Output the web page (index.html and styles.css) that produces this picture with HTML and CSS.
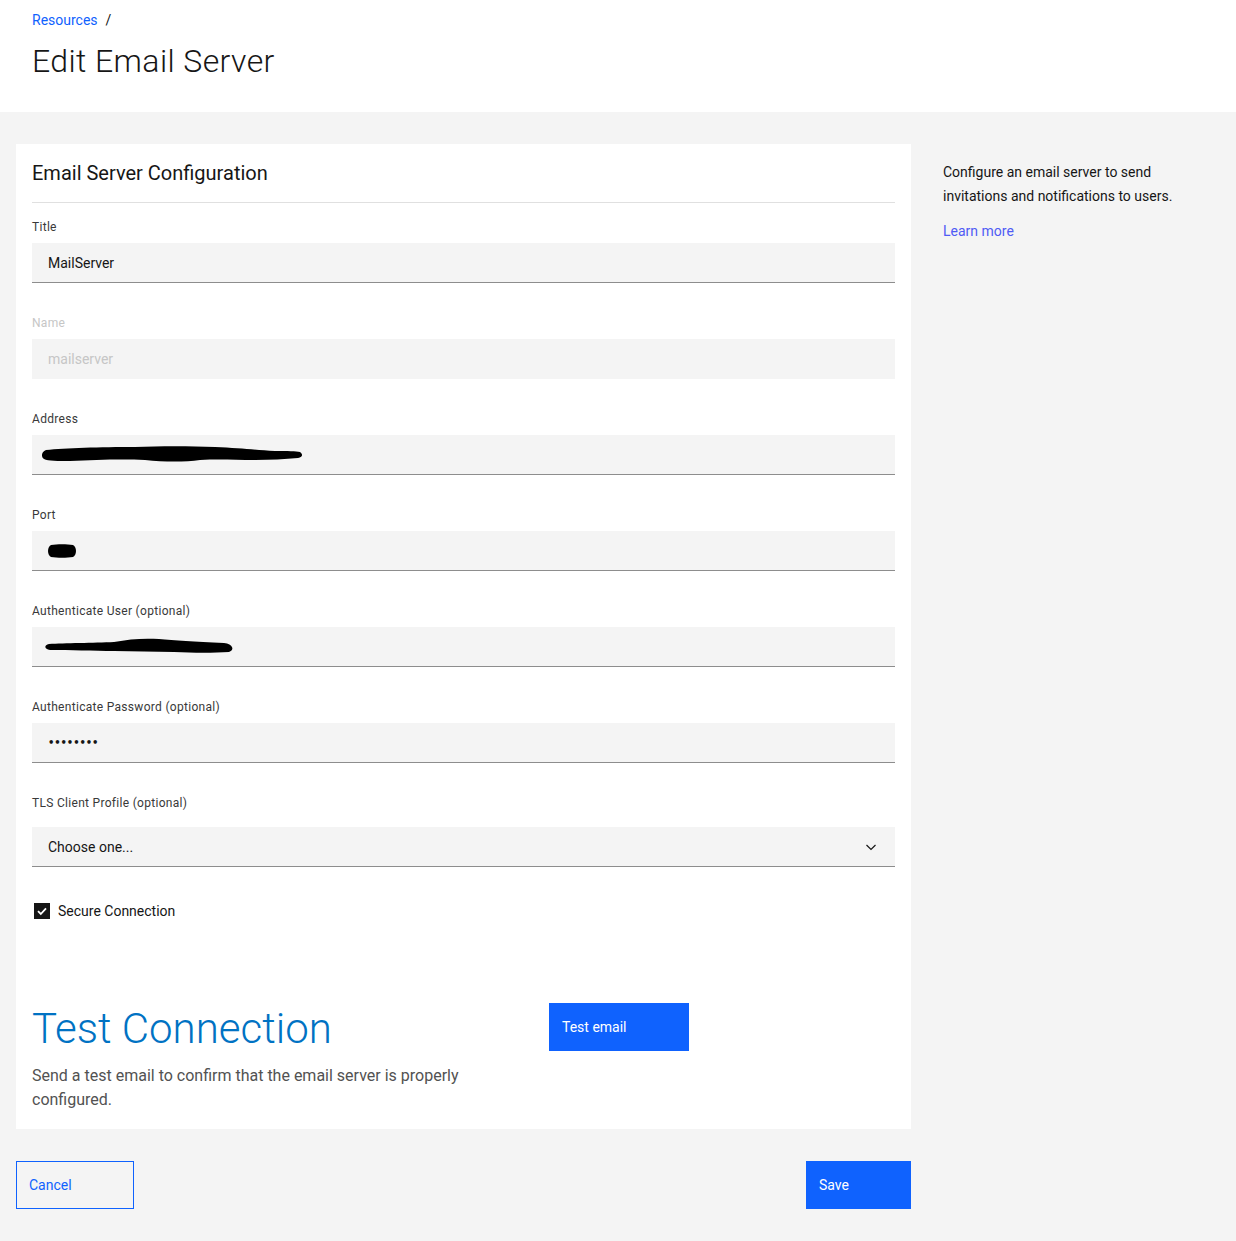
FILE: index.html
```html
<!DOCTYPE html>
<html lang="en">
<head>
<meta charset="utf-8">
<title>Edit Email Server</title>
<link rel="stylesheet" href="styles.css">
</head>
<body>
<header class="page-header">
  <nav class="breadcrumb"><a href="#" class="crumb-link">Resources</a><span class="crumb-sep">/</span></nav>
  <h1 class="page-title">Edit Email Server</h1>
</header>
<main class="content">
  <div class="main-col">
    <section class="card">
      <h2 class="card-title">Email Server Configuration</h2>
      <div class="divider"></div>
      <div class="field">
        <label class="label">Title</label>
        <div class="input">MailServer</div>
      </div>
      <div class="field">
        <label class="label disabled">Name</label>
        <div class="input input-disabled">mailserver</div>
      </div>
      <div class="field">
        <label class="label">Address</label>
        <div class="input">
          <svg class="redact" width="264" height="24" viewBox="0 0 264 24"><path d="M6 7 C25 5 60 4 95 4 C120 3 150 3 175 4 C200 5 215 7 235 8 C248 8 256 8 260 9 C263 11 263 14 258 15 C245 16 230 17 215 17 C195 17 180 16 160 17 C145 19 125 19 105 17 C80 16 55 17 30 18 C18 18 8 18 4 16 C1 14 1 9 6 7 Z" fill="#000"/></svg>
        </div>
      </div>
      <div class="field">
        <label class="label">Port</label>
        <div class="input">
          <svg class="redact redact-port" width="30" height="16" viewBox="0 0 30 16"><path d="M4 2 C10 1 20 1 26 2 C30 4 30 12 26 14 C20 15 10 15 4 14 C0 12 0 4 4 2 Z" fill="#000"/></svg>
        </div>
      </div>
      <div class="field">
        <label class="label">Authenticate User (optional)</label>
        <div class="input">
          <svg class="redact redact-user" width="192" height="22" viewBox="0 0 192 22"><path d="M5 8 C20 7 50 7 70 6 C85 3 100 2 115 3 C130 4 150 6 180 7 C189 8 191 14 185 16 C170 17 150 17 130 16 C110 16 90 15 70 15 C50 15 25 14 6 14 C0 13 0 9 5 8 Z" fill="#000"/></svg>
        </div>
      </div>
      <div class="field">
        <label class="label">Authenticate Password (optional)</label>
        <div class="input input-password">••••••••</div>
      </div>
      <div class="field field-select">
        <label class="label">TLS Client Profile (optional)</label>
        <div class="input select">Choose one...
          <svg class="chevron" width="16" height="16" viewBox="0 0 16 16"><path d="M3.5 6 L8 10.5 L12.5 6" fill="none" stroke="#161616" stroke-width="1.2"/></svg>
        </div>
      </div>
      <div class="checkbox-row">
        <span class="checkbox"><svg width="16" height="16" viewBox="0 0 16 16"><path d="M4 8.2 L6.8 11 L12 5.4" fill="none" stroke="#fff" stroke-width="1.8"/></svg></span>
        <span class="checkbox-label">Secure Connection</span>
      </div>
      <div class="test-section">
        <div class="test-text">
          <h2 class="test-title">Test Connection</h2>
          <p class="test-desc">Send a test email to confirm that the email server is properly configured.</p>
        </div>
        <button class="btn btn-primary btn-test">Test email</button>
      </div>
    </section>
    <div class="actions">
      <button class="btn btn-tertiary">Cancel</button>
      <button class="btn btn-primary btn-save">Save</button>
    </div>
  </div>
  <aside class="side">
    <p class="side-text">Configure an email server to send invitations and notifications to users.</p>
    <a href="#" class="side-link">Learn more</a>
  </aside>
</main>
</body>
</html>
```

FILE: styles.css
```css
* { box-sizing: border-box; }
html, body { margin: 0; padding: 0; }
body {
  font-family: Roboto, "Liberation Sans", sans-serif;
  color: #161616;
  background: #f4f4f4;
  width: 1236px;
  min-height: 1241px;
}
.page-header {
  background: #fff;
  height: 112px;
  padding: 11px 32px 0;
}
.breadcrumb { font-size: 14px; line-height: 18px; display: flex; gap: 8px; }
.crumb-link { color: #0f62fe; text-decoration: none; }
.crumb-sep { color: #161616; }
.page-title {
  margin: 12px 0 0;
  font-size: 32px;
  line-height: 40px;
  font-weight: 300;
  letter-spacing: 0.4px;
}
.content {
  display: flex;
  padding: 32px 0 0 16px;
}
.main-col { width: 895px; }
.card {
  background: #fff;
  padding: 16px 16px 17px;
}
.card-title {
  margin: 0;
  font-size: 20px;
  line-height: 26px;
  font-weight: 400;
}
.divider { height: 1px; background: #e0e0e0; margin-top: 16px; }
.field { margin-top: 16px; margin-bottom: 16px; }
.field + .field { margin-top: 32px; }
.label {
  display: block;
  font-size: 12px;
  line-height: 16px;
  color: #393939;
  margin-bottom: 8px;
  letter-spacing: 0.3px;
}
.label.disabled { color: #c6c6c6; }
.field-select .label { margin-bottom: 16px; }
.input {
  position: relative;
  height: 40px;
  background: #f4f4f4;
  border-bottom: 1px solid #8d8d8d;
  padding: 0 16px;
  font-size: 14px;
  display: flex;
  align-items: center;
  color: #161616;
}
.input-disabled { border-bottom-color: transparent; color: #c6c6c6; }
.input-password { font-family: "DejaVu Sans", sans-serif; font-size: 10px; font-weight: bold; letter-spacing: -0.1px; }
.select { justify-content: space-between; }
.redact { display: block; margin-left: -8px; }
.redact-port { margin-left: -1px; }
.redact-user { margin-left: -4px; }
.checkbox-row {
  display: flex;
  align-items: center;
  margin-top: 36px;
  padding-left: 2px;
  gap: 8px;
}
.checkbox {
  width: 16px; height: 16px;
  background: #161616;
  display: inline-flex;
}
.checkbox-label { font-size: 14px; }
.test-section {
  display: flex;
  margin-top: 84px;
}
.test-text { width: 517px; }
.test-title {
  margin: 0;
  font-size: 42px;
  line-height: 52px;
  font-weight: 300;
  color: #0072c3;
}
.test-desc {
  margin: 9px 0 0;
  font-size: 16px;
  line-height: 24px;
  color: #525252;
  width: 450px;
}
.btn {
  font-family: inherit;
  font-size: 14px;
  height: 48px;
  border: none;
  text-align: left;
  padding: 0 13px;
  cursor: pointer;
}
.btn-primary { background: #0f62fe; color: #fff; }
.btn-test { width: 140px; margin-top: 0; }
.actions {
  display: flex;
  justify-content: space-between;
  margin-top: 32px;
}
.btn-tertiary {
  background: transparent;
  border: 1px solid #0f62fe;
  color: #0f62fe;
  width: 118px;
  padding-left: 12px;
}
.btn-save { width: 105px; }
.side {
  padding: 16px 0 0 32px;
  width: 300px;
}
.side-text {
  margin: 0;
  font-size: 14px;
  line-height: 24px;
}
.side-link {
  display: inline-block;
  margin-top: 15px;
  font-size: 14px;
  color: #4f5bf5;
  text-decoration: none;
}
```
